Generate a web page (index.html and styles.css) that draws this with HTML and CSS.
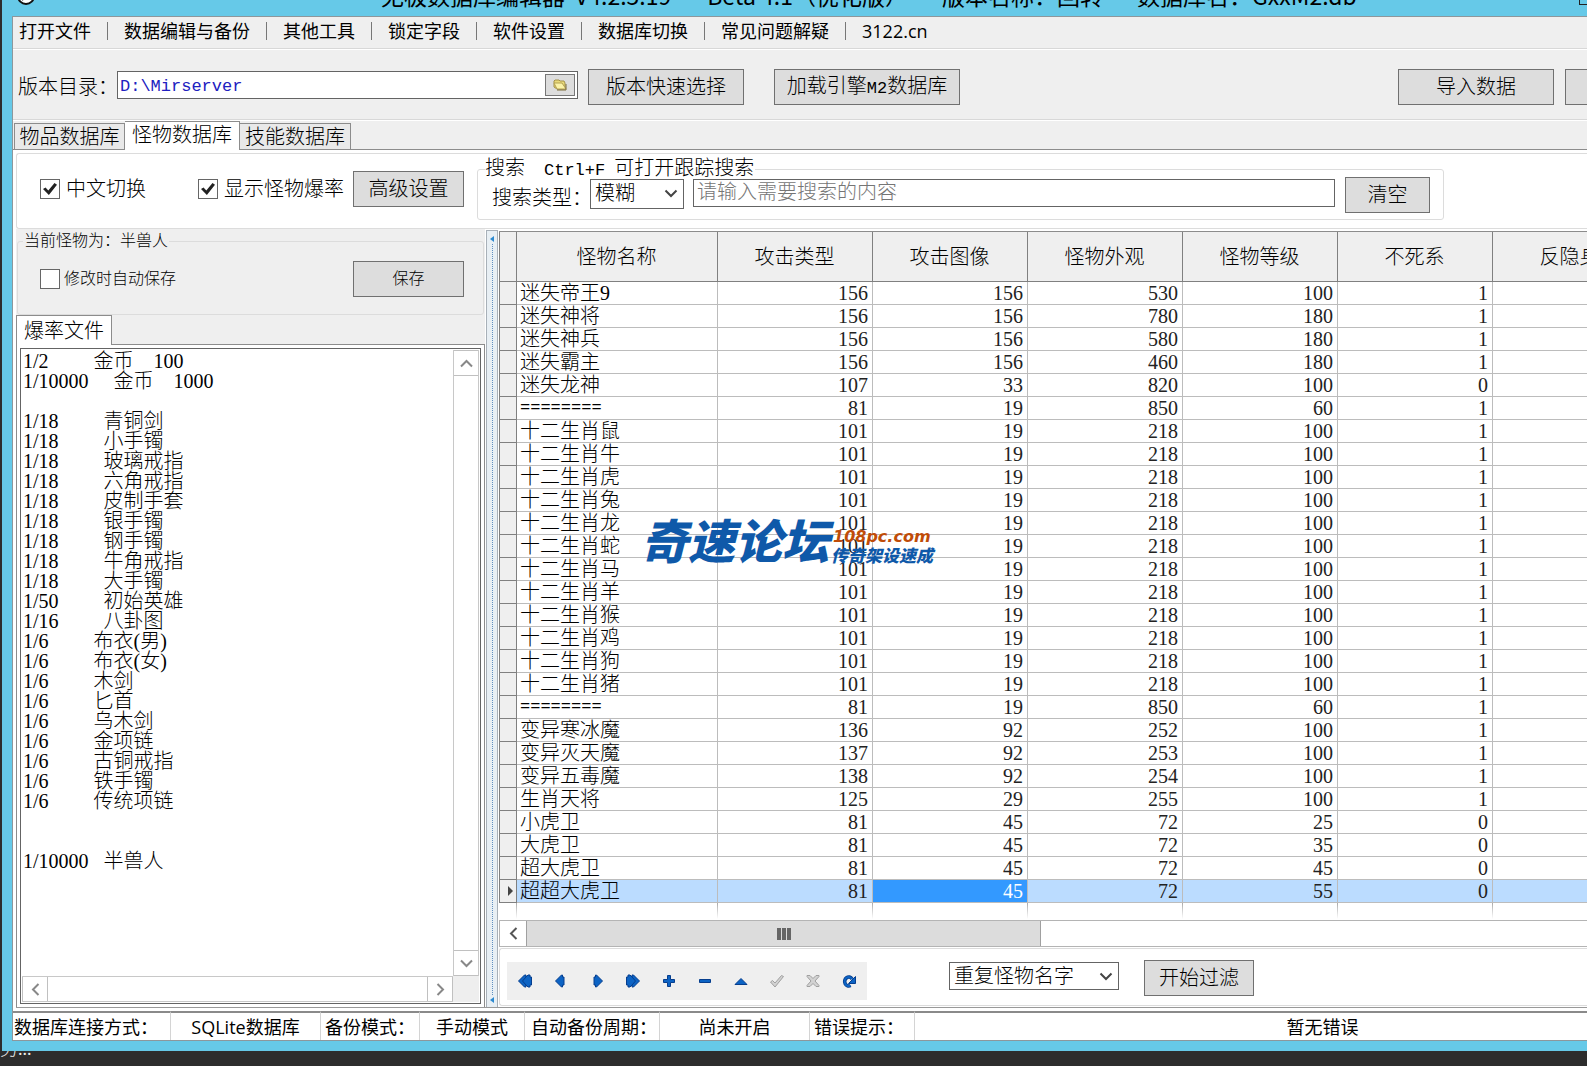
FILE: index.html
```html
<!DOCTYPE html>
<html lang="zh-CN">
<head>
<meta charset="utf-8">
<title>无极数据库编辑器</title>
<link rel="stylesheet" href="styles.css">
</head>
<body>
<div class="window">
  <header class="titlebar">
    <svg class="app-icon" width="18" height="18" viewBox="0 0 18 18" aria-hidden="true"><circle cx="9" cy="9" r="8" fill="#fff" stroke="#111" stroke-width="2"/><path d="M5 13l4-4 4 3" fill="none" stroke="#111" stroke-width="2"/></svg>
    <h1 class="title"><span>无极数据库编辑器</span><span>V4.2.5.19</span><span>--</span><span>Beta 4.1（优化版）</span><span class="title-part">版本名称：回转</span><span class="title-part">数据库名：GxxM2.db</span></h1>
    <svg class="max-icon" width="12" height="10" viewBox="0 0 12 10" aria-hidden="true"><rect x="0.5" y="0.5" width="11" height="9" fill="none" stroke="#222"/></svg>
  </header>

  <div class="client">
    <nav class="menu">
      <a href="#">打开文件</a><a href="#">数据编辑与备份</a><a href="#">其他工具</a><a href="#">锁定字段</a><a href="#">软件设置</a><a href="#">数据库切换</a><a href="#">常见问题解疑</a><a href="#">3122.cn</a>
    </nav>

    <div class="toolbar">
      <label class="path-label" for="path">版本目录：</label>
      <div class="path-box">
        <input id="path" class="path mono" type="text" value="D:\Mirserver">
        <button class="browse" type="button" aria-label="浏览">
          <svg width="14" height="12" viewBox="0 0 14 12"><path d="M1 8V2l1-1h4l1 1h4l1 2v6H4z" fill="#e8d978" stroke="#a3914a"/><path d="M1 4h8l4 6H4z" fill="#fbf3a8" stroke="#b4a153"/><path d="M4 11h9V5" fill="none" stroke="#7c6c3a"/></svg>
        </button>
      </div>
      <button class="btn btn-wide" type="button">版本快速选择</button>
      <button class="btn btn-engine" type="button">加载引擎<span class="mono">M2</span>数据库</button>
      <div class="toolbar-end">
        <button class="btn btn-wide" type="button">导入数据</button>
        <button class="btn btn-wide" type="button" aria-label="导出数据"></button>
      </div>
    </div>

    <div class="tabs" role="tablist">
      <button class="tab" type="button" role="tab">物品数据库</button>
      <button class="tab tab-active" type="button" role="tab" aria-selected="true">怪物数据库</button>
      <button class="tab" type="button" role="tab">技能数据库</button>
    </div>

    <main class="page">
      <section class="search-panel">
        <label class="check check-first"><input type="checkbox" checked>中文切换</label>
        <label class="check check-second"><input type="checkbox" checked>显示怪物爆率</label>
        <button class="btn btn-side" type="button">高级设置</button>
        <fieldset class="search-group">
          <legend>搜索 <span class="mono hotkey">Ctrl+F</span> 可打开跟踪搜索</legend>
          <div class="search-row">
            <label class="type-label" for="type">搜索类型：</label>
            <span class="select type-select"><select id="type"><option>模糊</option></select><svg width="14" height="9" viewBox="0 0 14 9"><path d="M1.500 1.500L7 7l5.500-5.500" fill="none" stroke="#444" stroke-width="2"/></svg></span>
            <input class="query" type="text" placeholder="请输入需要搜索的内容" aria-label="搜索内容">
            <button class="btn btn-clear" type="button">清空</button>
          </div>
        </fieldset>
      </section>

      <div class="split">
        <aside class="side">
          <fieldset class="current">
            <legend>当前怪物为：半兽人</legend>
            <div class="current-row">
              <label class="check"><input type="checkbox">修改时自动保存</label>
              <button class="btn btn-side" type="button">保存</button>
            </div>
          </fieldset>
          <div class="file-tabs"><button class="tab tab-file" type="button">爆率文件</button></div>
          <div class="file-panel">
            <div class="memo">
              <textarea wrap="off" spellcheck="false" aria-label="爆率文件">1/2         金币    100
1/10000     金币    1000

1/18         青铜剑
1/18         小手镯
1/18         玻璃戒指
1/18         六角戒指
1/18         皮制手套
1/18         银手镯
1/18         钢手镯
1/18         牛角戒指
1/18         大手镯
1/50         初始英雄
1/16         八卦图
1/6         布衣(男)
1/6         布衣(女)
1/6         木剑
1/6         匕首
1/6         乌木剑
1/6         金项链
1/6         古铜戒指
1/6         铁手镯
1/6         传统项链


1/10000   半兽人</textarea>
              <div class="vbar">
                <button type="button" aria-label="上"><svg width="13" height="9" viewBox="0 0 13 9"><path d="M1 7.500l5.500-5.500L12 7.500" fill="none" stroke="#888" stroke-width="2"/></svg></button>
                <button type="button" aria-label="下"><svg width="13" height="9" viewBox="0 0 13 9"><path d="M1 1.500L6.500 7 12 1.500" fill="none" stroke="#888" stroke-width="2"/></svg></button>
              </div>
              <div class="hbar">
                <button type="button" aria-label="左"><svg width="9" height="13" viewBox="0 0 9 13"><path d="M7.500 1L2 6.500 7.500 12" fill="none" stroke="#888" stroke-width="2"/></svg></button>
                <button type="button" aria-label="右"><svg width="9" height="13" viewBox="0 0 9 13"><path d="M1.500 1L7 6.500 1.500 12" fill="none" stroke="#888" stroke-width="2"/></svg></button>
              </div>
              <div class="corner"></div>
            </div>
          </div>
        </aside>

        <div class="splitter">
          <svg width="4" height="6" viewBox="0 0 4 6"><path d="M4 0v6L0 3z" fill="#2d8ad0"/></svg>
          <i></i>
          <svg width="4" height="6" viewBox="0 0 4 6"><path d="M4 0v6L0 3z" fill="#2d8ad0"/></svg>
        </div>

        <section class="data">
          <div class="grid-wrap">
            <table class="grid">
              <colgroup><col class="c-mark"><col class="c-name"><col class="c-num"><col class="c-num"><col class="c-num"><col class="c-num"><col class="c-num"><col class="c-num"></colgroup>
              <thead><tr><th></th><th>怪物名称</th><th>攻击类型</th><th>攻击图像</th><th>怪物外观</th><th>怪物等级</th><th>不死系</th><th>反隐身</th></tr></thead>
              <tbody>
                <tr><th></th><td>迷失帝王9</td><td>156</td><td>156</td><td>530</td><td>100</td><td>1</td><td></td></tr>
                <tr><th></th><td>迷失神将</td><td>156</td><td>156</td><td>780</td><td>180</td><td>1</td><td></td></tr>
                <tr><th></th><td>迷失神兵</td><td>156</td><td>156</td><td>580</td><td>180</td><td>1</td><td></td></tr>
                <tr><th></th><td>迷失霸主</td><td>156</td><td>156</td><td>460</td><td>180</td><td>1</td><td></td></tr>
                <tr><th></th><td>迷失龙神</td><td>107</td><td>33</td><td>820</td><td>100</td><td>0</td><td></td></tr>
                <tr><th></th><td><span class="mono">========</span></td><td>81</td><td>19</td><td>850</td><td>60</td><td>1</td><td></td></tr>
                <tr><th></th><td>十二生肖鼠</td><td>101</td><td>19</td><td>218</td><td>100</td><td>1</td><td></td></tr>
                <tr><th></th><td>十二生肖牛</td><td>101</td><td>19</td><td>218</td><td>100</td><td>1</td><td></td></tr>
                <tr><th></th><td>十二生肖虎</td><td>101</td><td>19</td><td>218</td><td>100</td><td>1</td><td></td></tr>
                <tr><th></th><td>十二生肖兔</td><td>101</td><td>19</td><td>218</td><td>100</td><td>1</td><td></td></tr>
                <tr><th></th><td>十二生肖龙</td><td>101</td><td>19</td><td>218</td><td>100</td><td>1</td><td></td></tr>
                <tr><th></th><td>十二生肖蛇</td><td>101</td><td>19</td><td>218</td><td>100</td><td>1</td><td></td></tr>
                <tr><th></th><td>十二生肖马</td><td>101</td><td>19</td><td>218</td><td>100</td><td>1</td><td></td></tr>
                <tr><th></th><td>十二生肖羊</td><td>101</td><td>19</td><td>218</td><td>100</td><td>1</td><td></td></tr>
                <tr><th></th><td>十二生肖猴</td><td>101</td><td>19</td><td>218</td><td>100</td><td>1</td><td></td></tr>
                <tr><th></th><td>十二生肖鸡</td><td>101</td><td>19</td><td>218</td><td>100</td><td>1</td><td></td></tr>
                <tr><th></th><td>十二生肖狗</td><td>101</td><td>19</td><td>218</td><td>100</td><td>1</td><td></td></tr>
                <tr><th></th><td>十二生肖猪</td><td>101</td><td>19</td><td>218</td><td>100</td><td>1</td><td></td></tr>
                <tr><th></th><td><span class="mono">========</span></td><td>81</td><td>19</td><td>850</td><td>60</td><td>1</td><td></td></tr>
                <tr><th></th><td>变异寒冰魔</td><td>136</td><td>92</td><td>252</td><td>100</td><td>1</td><td></td></tr>
                <tr><th></th><td>变异灭天魔</td><td>137</td><td>92</td><td>253</td><td>100</td><td>1</td><td></td></tr>
                <tr><th></th><td>变异五毒魔</td><td>138</td><td>92</td><td>254</td><td>100</td><td>1</td><td></td></tr>
                <tr><th></th><td>生肖天将</td><td>125</td><td>29</td><td>255</td><td>100</td><td>1</td><td></td></tr>
                <tr><th></th><td>小虎卫</td><td>81</td><td>45</td><td>72</td><td>25</td><td>0</td><td></td></tr>
                <tr><th></th><td>大虎卫</td><td>81</td><td>45</td><td>72</td><td>35</td><td>0</td><td></td></tr>
                <tr><th></th><td>超大虎卫</td><td>81</td><td>45</td><td>72</td><td>45</td><td>0</td><td></td></tr>
                <tr class="selected"><th><svg width="5" height="10" viewBox="0 0 5 10"><path d="M0 0v10l5-5z" fill="#444"/></svg></th><td>超超大虎卫</td><td>81</td><td class="focus">45</td><td>72</td><td>55</td><td>0</td><td></td></tr>
              </tbody>
              <tfoot><tr><td></td><td></td><td></td><td></td><td></td><td></td><td></td><td></td></tr></tfoot>
            </table>
            <div class="watermark">
              <b>奇速论坛</b>
              <div><em>108pc.com</em><strong>传奇架设速成</strong></div>
            </div>
          </div>
          <div class="grid-scroll">
            <button type="button" aria-label="左"><svg width="9" height="13" viewBox="0 0 9 13"><path d="M7.500 1L2 6.500 7.500 12" fill="none" stroke="#555" stroke-width="2"/></svg></button>
            <div class="thumb"><i></i><i></i><i></i></div>
          </div>
          <div class="footer">
            <div class="navigator">
              <button type="button" aria-label="首条"><svg viewBox="0 0 16 16"><path d="M1.500 8L7.500 2H9v2l2-2h2v2h1.500v8H13v2h-2l-2-2v2H7.500z" fill="#0c63c4" stroke="#063e8e"/><path d="M9 4L5.500 8 9 12" fill="none" stroke="#063e8e"/></svg></button>
              <button type="button" aria-label="上一条"><svg viewBox="0 0 16 16"><path d="M9.500 2v2h1.500v8H9.500v2h-1l-6-6 6-6z" fill="#0c63c4" stroke="#063e8e"/></svg></button>
              <button type="button" aria-label="下一条"><svg viewBox="0 0 16 16"><path d="M6.500 2v2H5v8h1.500v2h1l6-6-6-6z" fill="#0c63c4" stroke="#063e8e"/></svg></button>
              <button type="button" aria-label="末条"><svg viewBox="0 0 16 16"><path d="M14.500 8L8.500 2H7v2L5 2H3v2H1.500v8H3v2h2l2-2v2h1.500z" fill="#0c63c4" stroke="#063e8e"/><path d="M7 4l3.500 4L7 12" fill="none" stroke="#063e8e"/></svg></button>
              <button type="button" aria-label="添加"><svg viewBox="0 0 16 16"><path d="M6.500 2.500h3v4h4v3h-4v4h-3v-4h-4v-3h4z" fill="#0c63c4" stroke="#063e8e"/></svg></button>
              <button type="button" aria-label="删除"><svg viewBox="0 0 16 16"><path d="M2.500 6.500h11v3h-11z" fill="#0c63c4" stroke="#063e8e"/></svg></button>
              <button type="button" aria-label="编辑"><svg viewBox="0 0 16 16"><path d="M2 11.500h12L8 5.500z" fill="#0c63c4" stroke="#063e8e"/></svg></button>
              <button type="button" aria-label="提交" disabled><svg viewBox="0 0 16 16"><path d="M1.500 9l2-1.500L6 10l6.500-7.500 2 1L6 14z" fill="#d2d2d2" stroke="#a0a0a0"/></svg></button>
              <button type="button" aria-label="取消" disabled><svg viewBox="0 0 16 16"><path d="M2 2.500h3l3 3 3-3h3v1L10 8l4 4.500v1h-3l-3-3-3 3H2v-1L6 8 2 3.500z" fill="#d2d2d2" stroke="#a0a0a0"/></svg></button>
              <button type="button" aria-label="刷新"><svg viewBox="0 0 16 16"><path d="M9.500 12.500A4 4.500 0 1 1 11 6" fill="none" stroke="#063e8e" stroke-width="3.600"/><path d="M14.500 3.500v7H7.500z" fill="#0c63c4" stroke="#063e8e"/><path d="M9.500 12.500A4 4.500 0 1 1 11 6" fill="none" stroke="#0c63c4" stroke-width="2"/></svg></button>
            </div>
            <span class="select filter-select"><select aria-label="过滤条件"><option>重复怪物名字</option></select><svg width="14" height="9" viewBox="0 0 14 9"><path d="M1.500 1.500L7 7l5.500-5.500" fill="none" stroke="#444" stroke-width="2"/></svg></span>
            <button class="btn btn-filter" type="button">开始过滤</button>
          </div>
        </section>
      </div>
    </main>

    <footer class="status">
      <span class="s1">数据库连接方式：</span><span class="s2">SQLite数据库</span><span class="s3">备份模式：</span><span class="s4">手动模式</span><span class="s5">自动备份周期：</span><span class="s6">尚未开启</span><span class="s7">错误提示：</span><span class="s8">暂无错误</span>
    </footer>
  </div>
</div>
<div class="taskbar"><span>务...</span></div>
</body>
</html>
```
FILE: styles.css
```css
* { box-sizing: border-box; }

body {
  margin: 0;
  height: 100vh;
  min-height: 720px;
  display: flex;
  flex-direction: column;
  overflow: hidden;
  background: #2d2d2d;
  color: #000;
  font: 300 20px/20px "Liberation Serif", "Noto Sans CJK SC", sans-serif;
}

button, input, select, textarea {
  font: inherit;
  color: inherit;
  margin: 0;
  padding: 0;
  border-radius: 0;
  outline: 0;
}

button { white-space: nowrap; }
svg { display: block; flex: none; }
fieldset { margin: 0; min-width: 0; border: 1px solid #dcdcdc; border-radius: 3px; }

.mono { font-family: "Liberation Mono", "Noto Sans CJK SC", monospace; font-size: 17px; line-height: 16px; }

.window {
  flex: 1;
  min-height: 0;
  display: flex;
  flex-direction: column;
  margin-left: 2px;
  padding: 0 0 10px 10px;
  background: #66c9e8;
}

/* title bar */
.titlebar {
  height: 16px;
  flex: none;
  display: flex;
  align-items: flex-end;
  overflow: hidden;
}
.app-icon { margin: 0 0 11px 5px; }
.title {
  display: flex;
  gap: 10px;
  margin: 0 auto 0 346px;
  padding-bottom: 5px;
  font: 400 23px/32px "Noto Sans CJK SC", sans-serif;
  white-space: nowrap;
}
.title .title-part { margin-left: 24px; }
.max-icon { margin: 0 -4px 11px 0; }

.client {
  flex: 1;
  min-height: 0;
  display: flex;
  flex-direction: column;
  border: 1px solid #8d979c;
  border-right: 0;
  background: #efefef;
}

/* menu */
.menu {
  flex: none;
  height: 32px;
  display: flex;
  align-items: center;
  padding: 0 0 3px 6px;
  border-bottom: 1px solid #d8d8d8;
  font: 400 18px/20px "Open Sans", "Noto Sans CJK SC", sans-serif;
  white-space: nowrap;
}
.menu a { display: flex; align-items: center; color: #000; text-decoration: none; }
.menu a + a::before {
  content: "";
  width: 1px;
  height: 18px;
  margin: 0 16px;
  background: #777;
}

.btn {
  flex: none;
  height: 36px;
  border: 1px solid #707070;
  background: #dddddd;
  text-align: center;
}
.btn-wide { width: 156px; }
.btn-engine { width: 186px; margin-left: 20px; }
.btn-side { width: 111px; }
.btn-clear { width: 85px; margin-top: -2px; }
.btn-filter { width: 110px; }

/* path row */
.toolbar {
  flex: none;
  height: 71px;
  display: flex;
  align-items: center;
  gap: 10px;
  padding: 4px 0 0 5px;
  border-top: 1px solid #fff;
  border-bottom: 1px solid #d8d8d8;
  overflow: hidden;
}
.path-label { width: 89px; white-space: nowrap; }
.path-box {
  width: 461px;
  height: 28px;
  display: flex;
  align-items: center;
  margin-top: -4px;
  padding: 0 2px;
  border: 1px solid #646464;
  background: #fff;
}
.path { flex: 1; min-width: 0; padding-top: 3px; border: 0; background: none; color: #2020c0; }
.browse {
  width: 30px;
  height: 22px;
  display: grid;
  place-items: center;
  border: 1px solid #777;
  background: #ddd;
}
.toolbar-end { display: flex; gap: 11px; margin: 0 -134px 0 auto; }

/* tabs */
.tabs {
  flex: none;
  height: 30px;
  display: flex;
  align-items: flex-end;
  padding-left: 1px;
  border-top: 1px solid #fff;
  border-bottom: 1px solid #8c8c8c;
}
.tab {
  flex: none;
  width: 111px;
  height: 26px;
  border: 1px solid #8c8c8c;
  border-bottom: 0;
  background: #e9e9e9;
}
.tab + .tab { border-left: 0; }
.tab-active {
  width: 115px;
  height: 29px;
  margin-bottom: -1px;
  padding-bottom: 2px;
  background: #fff;
}

.page { flex: 1; min-height: 0; display: flex; flex-direction: column; padding: 3px 0 0 3px; background: #fff; }

/* search */
.search-panel {
  flex: none;
  height: 76px;
  display: flex;
  padding-left: 23px;
  border: 1px solid #dcdcdc;
  border-right: 0;
  border-radius: 3px 0 0 3px;
  overflow: hidden;
}
.search-panel .btn-side { margin-top: 17px; }
.check { display: flex; align-items: center; gap: 6px; white-space: nowrap; }
.check input {
  appearance: none;
  width: 20px;
  height: 20px;
  display: grid;
  place-items: center;
  border: 1px solid #666;
  background: #fff;
}
.check input:checked::after {
  content: "";
  width: 14px;
  height: 12px;
  background: #222;
  clip-path: polygon(0 50%, 18% 38%, 38% 62%, 82% 0, 100% 14%, 42% 100%);
}
.check-first { width: 158px; height: 70px; }
.check-second { width: 155px; height: 70px; }
.search-group {
  width: 967px;
  height: 61px;
  margin: 5px 0 0 13px;
  padding: 0 13px 0 14px;
}
.search-group legend { padding: 0 1px 0 0; margin-left: -7px; line-height: 18px; white-space: nowrap; }
.hotkey { margin: 0 4px 0 14px; }
.search-row { display: flex; align-items: flex-start; }
.type-label { width: 98px; margin-top: 9px; white-space: nowrap; }
.select { position: relative; display: block; flex: none; }
.select select {
  appearance: none;
  width: 100%;
  height: 100%;
  padding: 0 4px;
  border: 1px solid #646464;
  background: #fff;
}
.select svg { position: absolute; right: 6px; top: 10px; pointer-events: none; }
.type-select { width: 94px; height: 30px; }
.type-select select { padding-bottom: 2px; }
.query {
  flex: 1;
  min-width: 0;
  height: 28px;
  margin: 0 10px 0 9px;
  padding: 0 3px 2px;
  border: 1px solid #646464;
  background: #fff;
}
.query::placeholder { color: #757575; opacity: 1; }

/* split area */
.split { flex: 1; min-height: 0; display: flex; border-bottom: 1px solid #999; }
.side { flex: none; width: 469px; display: flex; flex-direction: column; background: #efefef; }
.current { flex: none; height: 86px; margin: 0 1px; padding: 0 20px 0 22px; font-size: 16px; }
.current legend { margin-left: -17px; padding: 0 1px; line-height: 24px; }
.current-row { display: flex; align-items: center; justify-content: space-between; padding-top: 8px; }
.current .btn-side { margin-right: -1px; }
.current-row .check { gap: 4px; }
.file-tabs { flex: none; height: 29px; display: flex; }
.tab-file { width: 96px; height: 30px; background: #fff; position: relative; }
.file-panel {
  flex: 1;
  min-height: 0;
  display: flex;
  padding: 3px;
  border: 1px solid #8c8c8c;
  border-bottom: 0;
  background: #fff;
}
.memo {
  flex: 1;
  display: grid;
  grid-template: minmax(0, 1fr) 26px / minmax(0, 1fr) 26px;
  padding: 1px;
  border: 1px solid #646464;
}
.memo textarea {
  resize: none;
  border: 0;
  padding: 1px 1px;
  overflow: hidden;
  background: #fff;
  white-space: pre;
}
.memo button { width: 26px; height: 26px; display: grid; place-items: center; border: 1px solid #c0c0c0; background: #fff; }
.vbar, .hbar { display: flex; justify-content: space-between; border: 0 solid #c8c8c8; }
.vbar { flex-direction: column; border-width: 0 1px; }
.vbar button { width: 24px; border-width: 1px 0; }
.hbar { border-width: 1px 0; }
.hbar button { height: 24px; border-width: 0 1px; }
.corner { background: #eee; }

.splitter {
  flex: none;
  width: 12px;
  display: flex;
  flex-direction: column;
  align-items: center;
  padding: 5px 0 4px;
  margin: 1px 0 0 1px;
  border: 1px solid #a8b0b8;
  border-bottom: 0;
  background: #e8eff4;
}
.splitter i { flex: 1; margin: 2px 0; border-left: 1px dotted #5f8fc0; }

/* data grid */
.data { flex: 1; min-width: 0; display: flex; flex-direction: column; margin: 2px 0 0 1px; }
.grid-wrap { position: relative; flex: 1; min-height: 0; overflow: hidden; border-top: 1px solid #8c8c8c; }
.grid { table-layout: fixed; width: 1149px; border-collapse: separate; border-spacing: 0; }
.c-mark { width: 18px; }
.c-name { width: 201px; }
.c-num { width: 155px; }
.grid th, .grid td {
  height: 23px;
  padding: 0 4px 0 3px;
  border: 0 solid #bcbcbc;
  border-width: 0 1px 1px 0;
  text-align: right;
  font-weight: inherit;
  white-space: nowrap;
  overflow: hidden;
}
.grid td { color: #222; }
.grid td:nth-child(2) { text-align: left; color: #000; }
.grid th { background: #efefef; border-color: #808080; text-align: center; }
.grid th:first-child { border-left-width: 1px; padding: 0 0 0 8px; }
.grid thead th { height: 50px; }
.grid .selected td { background: #bbdcff; }
.grid .selected .focus { background: #3399ff; color: #fff; }
.grid .mono { display: block; }
.grid tfoot td {
  height: 16px;
  border: 0;
  background: linear-gradient(#aaa, #fff) right / 1px 100% no-repeat;
}

.watermark {
  position: absolute;
  left: 142px;
  top: 281px;
  display: flex;
  align-items: flex-end;
  color: #0f59a9;
  font: italic 700 17px/18px "Noto Sans CJK SC", sans-serif;
  white-space: nowrap;
  pointer-events: none;
}
.watermark b { font-size: 47px; line-height: 52px; font-weight: 900; }
.watermark div { display: grid; margin: 0 0 1px 2px; }
.watermark em { padding-left: 2px; color: #c04c08; font: italic 700 16px/18px "DejaVu Sans", sans-serif; }

.grid-scroll { flex: none; height: 27px; display: flex; border: 1px solid #b4b4b4; border-right: 0; }
.grid-scroll button { width: 26px; display: grid; place-items: center; border: 0; background: #fff; }
.thumb {
  width: 515px;
  display: flex;
  align-items: center;
  justify-content: center;
  gap: 1px;
  border: 0 solid #a0a0a0;
  border-width: 0 1px;
  background: #dcdcdc;
}
.thumb i { width: 4px; height: 12px; background: #666; }

.footer {
  flex: none;
  height: 58px;
  display: flex;
  margin: 1px 0 1px;
  padding: 11px 0 0 7px;
  border: 1px solid #dcdcdc;
  border-right: 0;
  border-radius: 3px 0 0 3px;
}
.navigator { display: flex; width: 360px; height: 38px; margin-top: 2px; background: #efefef; }
.navigator button { width: 36px; display: grid; place-items: center; border: 0; background: none; }
.navigator svg { width: 16px; height: 16px; }
.filter-select { width: 170px; height: 28px; margin: 2px 25px 0 82px; }

/* status bar */
.status {
  flex: none;
  display: flex;
  padding-top: 3px;
  background: #fff;
  font: 400 18px/27px "Open Sans", "Noto Sans CJK SC", sans-serif;
  white-space: nowrap;
  overflow: hidden;
}
.status span { flex: none; height: 29px; padding-top: 1px; border-top: 2px solid #8a8a8a; border-right: 1px solid #d4d4d4; text-align: center; overflow: hidden; }
.status .s1, .status .s3, .status .s5, .status .s7 { text-align: left; padding-left: 4px; }
.status .s1 { width: 158px; padding-left: 1px; }
.s2 { width: 150px; }
.s3 { width: 99px; }
.s4 { width: 105px; }
.status .s5 { width: 135px; padding-left: 6px; }
.s6 { width: 150px; }
.s7 { width: 105px; }
.s8 { width: 816px; }

.taskbar { flex: none; height: 15px; display: flex; align-items: flex-start; overflow: hidden; color: #eee; font-size: 18px; }
.taskbar span { margin-top: -12px; }
```
